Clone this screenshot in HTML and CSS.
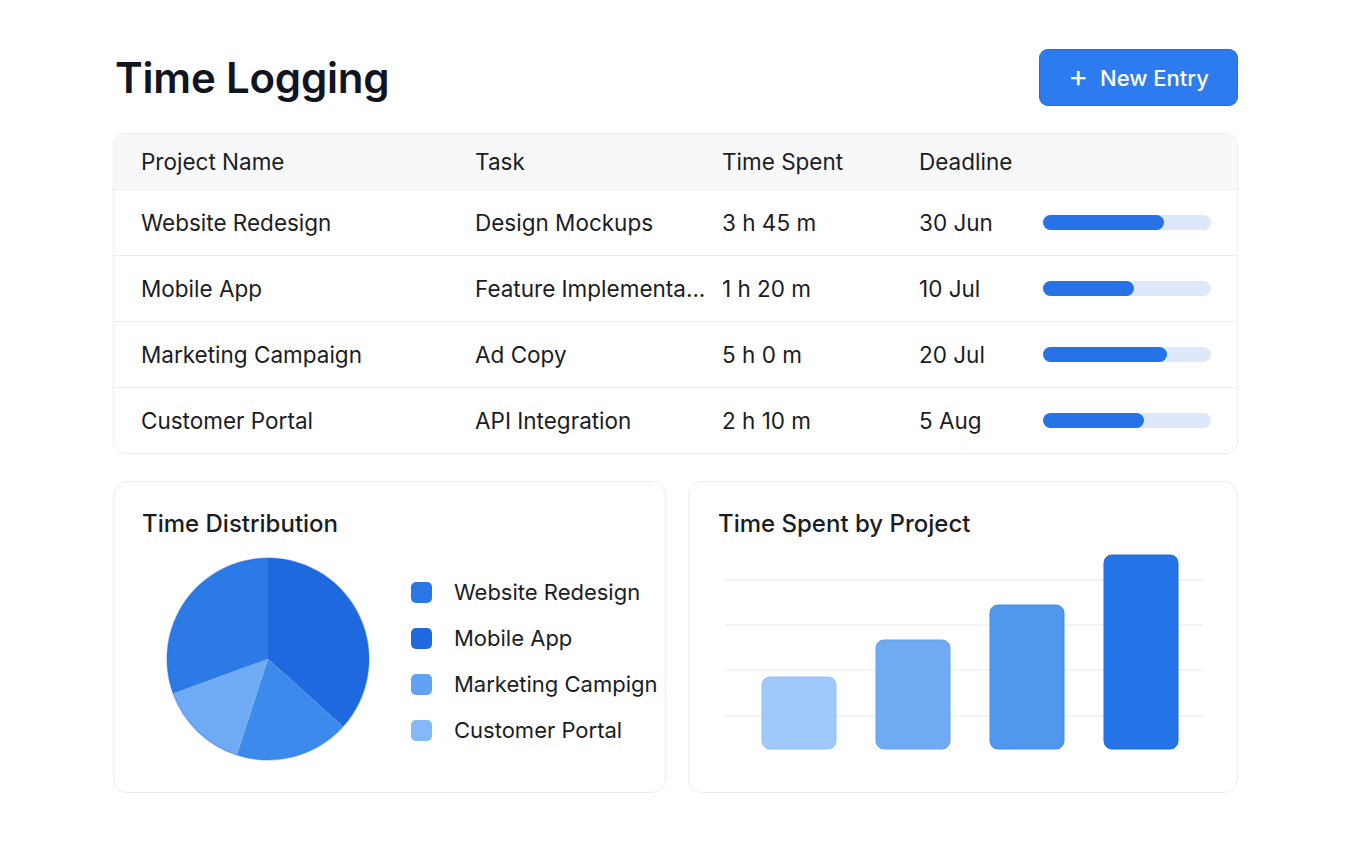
FILE: index.html
```html
<!DOCTYPE html>
<html lang="en">
<head>
    <meta charset="UTF-8">
    <meta name="viewport" content="width=device-width, initial-scale=1.0">
    <title>Time Logging</title>
    <link rel="stylesheet" href="styles.css">
</head>
<body>
<div class="pagina">
    <div class="topo">
        <h1 class="titulo">Time Logging</h1>
        <button class="botao-novo"><span class="mais">+</span> New Entry</button>
    </div>

    <div class="tabela">
        <div class="linha cabecalho">
            <span>Project Name</span>
            <span>Task</span>
            <span>Time Spent</span>
            <span>Deadline</span>
            <span></span>
        </div>
        <div class="linha">
            <span>Website Redesign</span>
            <span class="tarefa">Design Mockups</span>
            <span>3 h 45 m</span>
            <span>30 Jun</span>
            <div class="barra"><div class="preenchido" style="width: 72%"></div></div>
        </div>
        <div class="linha">
            <span>Mobile App</span>
            <span class="tarefa" title="Feature Implementation">Feature Implementa...</span>
            <span>1 h 20 m</span>
            <span>10 Jul</span>
            <div class="barra"><div class="preenchido" style="width: 54%"></div></div>
        </div>
        <div class="linha">
            <span>Marketing Campaign</span>
            <span class="tarefa">Ad Copy</span>
            <span>5 h 0 m</span>
            <span>20 Jul</span>
            <div class="barra"><div class="preenchido" style="width: 74%"></div></div>
        </div>
        <div class="linha">
            <span>Customer Portal</span>
            <span class="tarefa">API Integration</span>
            <span>2 h 10 m</span>
            <span>5 Aug</span>
            <div class="barra"><div class="preenchido" style="width: 60%"></div></div>
        </div>
    </div>

    <div class="graficos">
        <div class="cartao">
            <h2 class="cartao-titulo">Time Distribution</h2>
            <div class="distribuicao">
                <svg class="pizza" width="204" height="204" viewBox="-1 -1 204 204">
                    <path d="M101 101 L101 0 A101 101 0 0 1 176.06 168.58 Z" fill="#1f69df"/>
                    <path d="M101 101 L176.06 168.58 A101 101 0 0 1 69.79 197.06 Z" fill="#3b8aec"/>
                    <path d="M101 101 L69.79 197.06 A101 101 0 0 1 6.09 135.54 Z" fill="#6faaf4"/>
                    <path d="M101 101 L6.09 135.54 A101 101 0 0 1 101 0 Z" fill="#2b7ae6"/>
                    <circle cx="101" cy="101" r="101" fill="none" stroke="#1d63d6" stroke-opacity=".35" stroke-width="1.5"/>
                </svg>
                <ul class="legenda">
                    <li><i class="cor" style="background: #2a78e6"></i>Website Redesign</li>
                    <li><i class="cor" style="background: #1f69df"></i>Mobile App</li>
                    <li><i class="cor" style="background: #62a2f2"></i>Marketing Campign</li>
                    <li><i class="cor" style="background: #85b8f7"></i>Customer Portal</li>
                </ul>
            </div>
        </div>

        <div class="cartao">
            <h2 class="cartao-titulo direita">Time Spent by Project</h2>
            <svg class="colunas" width="478" height="200" viewBox="0 0 478 200">
                <g stroke="#eef0f4" stroke-width="1.5">
                    <line x1="0" y1="27" x2="478" y2="27"/>
                    <line x1="0" y1="72" x2="478" y2="72"/>
                    <line x1="0" y1="117" x2="478" y2="117"/>
                    <line x1="0" y1="163" x2="478" y2="163"/>
                </g>
                <rect x="37" y="124" width="74" height="72" rx="8" fill="#a0c8fb" stroke="#92bff9"/>
                <rect x="151" y="87" width="74" height="109" rx="8" fill="#70aaf3" stroke="#63a1f1"/>
                <rect x="265" y="52" width="74" height="144" rx="8" fill="#5097ee" stroke="#438deb"/>
                <rect x="379" y="2" width="74" height="194" rx="8" fill="#2474e8" stroke="#1a69e0"/>
            </svg>
        </div>
    </div>
</div>
</body>
</html>
```

FILE: styles.css
```css
* {
    box-sizing: border-box;
}

body {
    margin: 0;
    background-color: #fff;
    font-family: Inter, "Noto Sans", sans-serif;
    color: #1a1d24;
}

.pagina {
    width: 1125px;
    margin: 49px 0 0 113px;
}

.topo {
    display: flex;
    align-items: center;
    justify-content: space-between;
    height: 57px;
}

.titulo {
    margin: 0 0 0 2px;
    font-size: 42px;
    font-weight: 600;
    letter-spacing: -0.2px;
    color: #111522;
}

.botao-novo {
    width: 199px;
    height: 57px;
    border: 1px solid #1f6fe0;
    border-radius: 9px;
    background-color: #2c7cf0;
    color: #fff;
    font-family: Inter, "Noto Sans", sans-serif;
    font-size: 22px;
    font-weight: 500;
    display: flex;
    align-items: center;
    justify-content: center;
    gap: 12px;
}

.mais {
    font-size: 30px;
    font-weight: 400;
    margin-top: -4px;
}

.tabela {
    margin-top: 27px;
    border: 1px solid #eceef2;
    border-radius: 12px;
    overflow: hidden;
}

.linha {
    display: grid;
    grid-template-columns: 334px 247px 197px 124px 168px;
    align-items: center;
    padding: 0 27px 0 27px;
    height: 66px;
    font-size: 22.5px;
    border-top: 1px solid #eceef2;
}

.linha.cabecalho {
    height: 55px;
    border-top: none;
    background-color: #f7f8fa;
}

.tarefa {
    white-space: nowrap;
}

.barra {
    height: 15px;
    border-radius: 8px;
    background-color: #dde9fb;
}

.preenchido {
    height: 100%;
    border-radius: 8px;
    background-color: #2673e8;
}

.graficos {
    display: grid;
    grid-template-columns: 553px 550px;
    gap: 22px;
    margin-top: 27px;
}

.cartao {
    height: 312px;
    border: 1px solid #eceef2;
    border-radius: 14px;
    padding: 27px 0 0 28px;
}

.cartao-titulo {
    margin: 0;
    font-size: 24px;
    font-weight: 500;
    line-height: 30px;
}

.cartao-titulo.direita {
    padding-left: 1px;
}

.distribuicao {
    display: flex;
    align-items: center;
    margin-top: 18px;
}

.pizza {
    margin-left: 24px;
}

.legenda {
    list-style: none;
    margin: 4px 0 0 41px;
    padding: 0;
    font-size: 22px;
}

.legenda li {
    display: flex;
    align-items: center;
    height: 46px;
}

.cor {
    width: 21px;
    height: 21px;
    border-radius: 5px;
    margin-right: 22px;
}

.colunas {
    display: block;
    margin: 14px 0 0 8px;
}
```
